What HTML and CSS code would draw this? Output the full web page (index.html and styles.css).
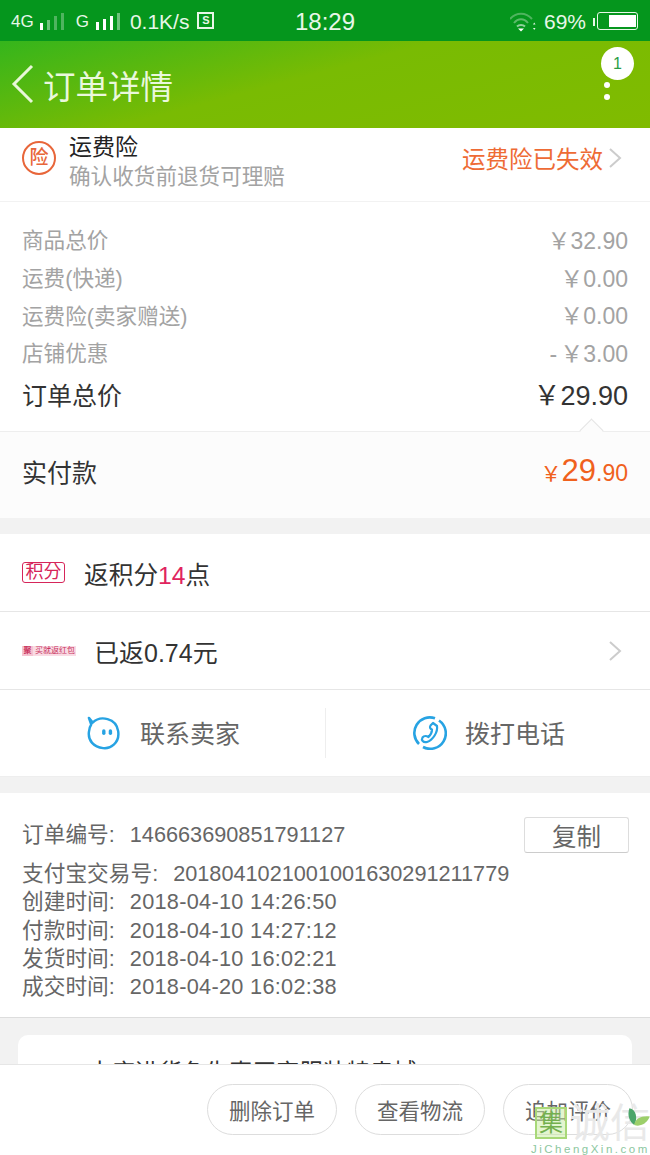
FILE: index.html
```html
<!DOCTYPE html>
<html lang="zh-CN">
<head>
    <meta charset="UTF-8">
    <meta name="viewport" content="width=device-width, initial-scale=1.0">
    <title>订单详情</title>
    <link rel="stylesheet" href="styles.css">
</head>
<body>
    <div class="page">
        <div class="status-bar">
            <div class="status-left">
                <span class="net-4g">4G</span>
                <svg class="signal" width="30" height="22" viewBox="0 0 30 22">
                    <rect x="0" y="12" width="3" height="7" fill="#fff"/>
                    <rect x="7" y="9" width="3" height="10" fill="#6fc27c"/>
                    <rect x="14" y="5" width="3" height="14" fill="#4fb45f"/>
                    <rect x="21" y="2" width="3" height="17" fill="#4fb45f"/>
                </svg>
                <span class="net-g">G</span>
                <svg class="signal" width="26" height="22" viewBox="0 0 26 22">
                    <rect x="0" y="11" width="3" height="8" fill="#fff"/>
                    <rect x="7" y="8" width="3" height="11" fill="#fff"/>
                    <rect x="14" y="5" width="3" height="14" fill="#fff"/>
                    <rect x="21" y="2" width="3" height="17" fill="#6fc27c"/>
                </svg>
                <span class="speed">0.1K/s</span>
                <span class="s-icon">S</span>
            </div>
            <div class="clock">18:29</div>
            <div class="status-right">
                <svg width="26" height="22" viewBox="0 0 26 22" fill="none">
                    <path d="M0 8 C6 1 16 1 22 8" stroke="#4fb45f" stroke-width="2"/>
                    <path d="M4 12 C8 7 14 7 18 12" stroke="#5cba6a" stroke-width="2"/>
                    <path d="M7 15.500 C9 13.500 13 13.500 15 15.500" stroke="#8fd09a" stroke-width="2"/>
                    <path d="M8 17.500 L14 17.500 L11 20.500 Z" fill="#fff"/>
                    <path d="M23 13.500 L25.500 13.500 L24.250 11.500 Z M23 17 L25.500 17 L24.250 19 Z" fill="#e8f7e8"/>
                </svg>
                <span class="percent">69%</span>
                <div class="battery-nub"></div>
                <div class="battery"><div class="battery-fill"></div></div>
            </div>
        </div>

        <header class="topbar">
            <svg class="back" width="24" height="40" viewBox="0 0 24 40" fill="none">
                <path d="M21 2 L3 20 L21 38" stroke="#e8f7d8" stroke-width="3"/>
            </svg>
            <h1 class="title">订单详情</h1>
            <div class="more">
                <span class="more-badge">1</span>
                <i class="more-dot"></i>
                <i class="more-dot"></i>
            </div>
        </header>

        <main class="content">
            <section class="insurance">
                <div class="insurance-icon">险</div>
                <div class="insurance-text">
                    <div class="insurance-name">运费险</div>
                    <div class="insurance-desc">确认收货前退货可理赔</div>
                </div>
                <div class="insurance-state">运费险已失效</div>
                <svg class="chevron" width="14" height="22" viewBox="0 0 14 22" fill="none">
                    <path d="M2 2 L12 11 L2 20" stroke="#ccc" stroke-width="2"/>
                </svg>
            </section>

            <section class="prices">
                <div class="price-row"><span>商品总价</span><span class="price-value">￥32.90</span></div>
                <div class="price-row"><span>运费(快递)</span><span class="price-value">￥0.00</span></div>
                <div class="price-row"><span>运费险(卖家赠送)</span><span class="price-value">￥0.00</span></div>
                <div class="price-row"><span>店铺优惠</span><span class="price-value"><span class="minus">-</span>￥3.00</span></div>
                <div class="price-total"><span>订单总价</span><span class="total-value">￥29.90</span></div>
                <i class="price-arrow"></i>
            </section>

            <section class="paid">
                <span class="paid-label">实付款</span>
                <span class="paid-amount"><small class="paid-yen">￥</small>29<small class="paid-cents">.90</small></span>
            </section>

            <section class="block perks">
                <div class="perk-row">
                    <span class="points-tag">积分</span>
                    <span class="perk-text">返积分<em>14</em>点</span>
                </div>
                <div class="perk-row">
                    <span class="packet-tag"><b>聚</b>买就返红包</span>
                    <span class="perk-text perk-text-wide">已返0.74元</span>
                    <svg class="chevron chevron-end" width="14" height="22" viewBox="0 0 14 22" fill="none">
                        <path d="M2 2 L12 11 L2 20" stroke="#ccc" stroke-width="2"/>
                    </svg>
                </div>
                <div class="contact-row">
                    <div class="contact">
                        <svg width="34" height="34" viewBox="0 0 36 36" fill="none">
                            <path d="M6 7 C14 -1 31 2 33 16 C35 29 24 35 17 34 C7 33 1 26 2 17 C2.300 14 3 11 4.500 9 L2 2 Z" stroke="#27a3e3" stroke-width="2.600" stroke-linejoin="round"/>
                            <rect x="16" y="14" width="3.600" height="6" rx="1.800" fill="#27a3e3"/>
                            <rect x="23" y="14" width="3.600" height="6" rx="1.800" fill="#27a3e3"/>
                        </svg>
                        <span>联系卖家</span>
                    </div>
                    <div class="contact contact-phone">
                        <svg width="34" height="34" viewBox="0 0 34 34" fill="none">
                            <path d="M6 28 A15.500 15.500 0 0 1 22 2.300" stroke="#27a3e3" stroke-width="2.600"/>
                            <path d="M26 4.500 A15.500 15.500 0 0 1 10 31" stroke="#27a3e3" stroke-width="2.600"/>
                            <path d="M20 7 L24 10 C25 16 20 24 14 26 C10 27 8 24 9.500 21.500 C11 19.500 14 20 15.500 21 C17.500 19 19 16.500 19 13.500 C17 13 16.500 11 17.500 9.500 Z" stroke="#27a3e3" stroke-width="2.200" stroke-linejoin="round"/>
                        </svg>
                        <span>拨打电话</span>
                    </div>
                </div>
            </section>

            <section class="block order-info">
                <div class="info-first">
                    <div class="info-main">
                        <span class="info-key">订单编号:</span>
                        <span class="info-value">146663690851791127</span>
                    </div>
                    <button class="copy-btn">复制</button>
                </div>
                <div class="info-row"><span class="info-key">支付宝交易号:</span><span class="info-value">2018041021001001630291211779</span></div>
                <div class="info-row"><span class="info-key">创建时间:</span><span class="info-value info-date">2018-04-10 14:26:50</span></div>
                <div class="info-row"><span class="info-key">付款时间:</span><span class="info-value info-date">2018-04-10 14:27:12</span></div>
                <div class="info-row"><span class="info-key">发货时间:</span><span class="info-value info-date">2018-04-10 16:02:21</span></div>
                <div class="info-row"><span class="info-key">成交时间:</span><span class="info-value info-date">2018-04-20 16:02:38</span></div>
            </section>

            <section class="tip-card">本店进货色失真买家服装特卖城</section>
        </main>

        <footer class="actions">
            <button class="pill">删除订单</button>
            <button class="pill">查看物流</button>
            <button class="pill">追加评价</button>
        </footer>

        <div class="watermark">
            <div class="mark-row">
                <span class="mark-box">集</span>
                <span class="mark-name">诚信</span>
                <svg class="mark-leaf" width="24" height="24" viewBox="0 0 20 20">
                    <path d="M2 1 C8 2 9 10 6 15 C2 12 0 7 2 1 Z" fill="#4ca56a"/>
                    <path d="M6 15 C7 9 13 7 19 8 C17 13 12 17 6 15 Z" fill="#9ccf6a"/>
                </svg>
            </div>
            <div class="mark-url">JiChengXin.com</div>
        </div>
    </div>
</body>
</html>
```

FILE: styles.css
```css
* {
    box-sizing: border-box;
}
body {
    margin: 0;
    font-family: "Liberation Sans", "Noto Sans CJK SC", sans-serif;
    background-color: #f2f2f2;
}
.page {
    position: relative;
    width: 650px;
    height: 1155px;
    display: flex;
    flex-direction: column;
    overflow: hidden;
}

/* status bar */
.status-bar {
    height: 41px;
    flex: none;
    display: flex;
    align-items: center;
    padding: 2px 12px 0 11px;
    background-color: #05961d;
    color: #e8f7e8;
}
.status-left {
    width: 284px;
    flex: none;
    display: flex;
    align-items: center;
}
.net-4g {
    font-size: 17px;
    margin-right: 6px;
}
.net-g {
    font-size: 17px;
    margin: 0 7px 0 6px;
}
.signal {
    flex: none;
}
.speed {
    font-size: 21px;
    margin: 0 8px 0 8px;
}
.s-icon {
    width: 17px;
    height: 17px;
    margin-top: -3px;
    border: 2px solid #e8f7e8;
    font-size: 11px;
    font-weight: bold;
    line-height: 13px;
    text-align: center;
}
.clock {
    flex: 1;
    font-size: 24px;
}
.status-right {
    display: flex;
    align-items: center;
    gap: 8px;
}
.percent {
    font-size: 21px;
    margin-right: -1px;
}
.battery-nub {
    width: 2px;
    height: 8px;
    margin-right: -6px;
    background-color: #e8f7e8;
}
.battery {
    width: 41px;
    height: 18px;
    margin-top: -2px;
    border: 1px solid #e8f7e8;
    border-radius: 3px;
    padding: 2px 1px;
    display: flex;
    justify-content: flex-end;
}
.battery-fill {
    width: 27px;
    background-color: #fff;
}

/* title bar */
.topbar {
    height: 87px;
    flex: none;
    display: flex;
    align-items: center;
    padding: 0 16px 0 11px;
    background: linear-gradient(165deg, #35b51c 0%, #79bb03 45%, #80bb00 100%);
}
.back {
    margin: -1px 8px 0 0;
}
.title {
    flex: 1;
    margin: 0;
    font-size: 32.500px;
    font-weight: normal;
    color: #eaf8dc;
}
.more {
    width: 33px;
    display: flex;
    flex-direction: column;
    align-items: center;
    gap: 6px;
    margin-bottom: 22px;
}
.more-badge {
    width: 33px;
    height: 33px;
    margin-bottom: -4px;
    border-radius: 50%;
    background-color: #fff;
    color: #2a9d46;
    font-size: 16px;
    line-height: 33px;
    text-align: center;
}
.more-dot {
    width: 6px;
    height: 6px;
    border-radius: 50%;
    background-color: #fff;
    margin-right: 21px;
}

/* main */
.content {
    flex: 1;
    overflow: hidden;
}
.insurance {
    height: 74px;
    display: flex;
    align-items: center;
    padding: 0 28px 14px 22px;
    background-color: #fff;
    border-bottom: 1px solid #f2f2f2;
}
.insurance-icon {
    width: 34px;
    height: 34px;
    border: 2px solid #e8663a;
    border-radius: 50%;
    color: #e8663a;
    font-size: 19px;
    font-weight: 500;
    line-height: 29px;
    text-align: center;
    margin-right: 13px;
}
.insurance-text {
    flex: 1;
}
.insurance-name {
    font-size: 23px;
    line-height: 30px;
    color: #222;
    margin-top: 8px;
}
.insurance-desc {
    font-size: 21.600px;
    line-height: 30px;
    color: #a3a3a3;
}
.insurance-state {
    font-size: 23.500px;
    color: #ee6b35;
    margin-right: 5px;
}
.chevron {
    flex: none;
}
.prices {
    position: relative;
    height: 230px;
    padding: 18px 22px 0;
    background-color: #fff;
    border-bottom: 1px solid #eee;
}
.price-row,
.price-total {
    display: flex;
    justify-content: space-between;
    align-items: center;
}
.price-row {
    height: 37.700px;
    font-size: 21.600px;
    color: #a3a3a3;
}
.price-value {
    font-size: 23px;
}
.minus {
    margin-right: 3px;
}
.price-total {
    height: 44px;
    margin-top: 1px;
    font-size: 25px;
    color: #333;
}
.total-value {
    font-size: 27px;
}
.price-arrow {
    position: absolute;
    right: 50px;
    bottom: -8px;
    width: 17px;
    height: 17px;
    background-color: #fcfcfc;
    border-left: 1px solid #e4e4e4;
    border-top: 1px solid #e4e4e4;
    transform: rotate(45deg);
}
.paid {
    height: 86px;
    display: flex;
    justify-content: space-between;
    align-items: center;
    padding: 0 22px 8px;
    background-color: #fcfcfc;
}
.paid-label {
    font-size: 25px;
    color: #333;
}
.paid-amount {
    font-size: 31px;
    color: #f0611d;
}
.paid-yen {
    font-size: 21px;
}
.paid-cents {
    font-size: 23px;
}
.block {
    margin-top: 16px;
    background-color: #fff;
}
.perk-row {
    height: 78px;
    display: flex;
    align-items: center;
    padding: 0 28px 0 22px;
    border-bottom: 1px solid #e6e6e6;
}
.points-tag {
    width: 43px;
    height: 21px;
    border: 1px solid #d6255a;
    border-radius: 3px;
    color: #d6255a;
    font-size: 18px;
    line-height: 18px;
    text-align: center;
    margin: -1px 19px 0 0;
}
.perk-text {
    font-size: 24.700px;
    color: #333;
}
.perk-text em {
    font-style: normal;
    color: #e0245e;
}
.perk-text-wide {
    flex: 1;
    font-size: 25px;
    margin-left: -1px;
}
.packet-tag {
    width: 54px;
    height: 10px;
    margin-right: 19px;
    background-color: #f9dbe4;
    color: #c9345f;
    font-size: 8px;
    line-height: 10px;
    white-space: nowrap;
    overflow: hidden;
}
.packet-tag b {
    display: inline-block;
    width: 11px;
    text-align: center;
    margin-right: 2px;
    background-color: #f5c4d2;
}
.contact-row {
    height: 87px;
    display: flex;
    align-items: center;
    border-bottom: 1px solid #eee;
}
.contact {
    flex: 0 0 50%;
    height: 50px;
    display: flex;
    align-items: center;
    justify-content: center;
    gap: 19px;
    padding-left: 2px;
    font-size: 25px;
    color: #666;
}
.contact span {
    margin-top: -2px;
}
.contact-phone {
    gap: 18px;
    border-left: 1px solid #eee;
}
.order-info {
    height: 225px;
    padding: 24px 22px 0;
    border-bottom: 1px solid #ddd;
    font-size: 21.700px;
    color: #666;
}
.info-first {
    display: flex;
    align-items: center;
    height: 36px;
    margin-bottom: 3px;
}
.info-main {
    flex: 1;
    display: flex;
    align-items: baseline;
    margin-bottom: 5px;
}
.info-row {
    display: flex;
    height: 28.250px;
    align-items: baseline;
}
.info-key {
    margin-right: 15px;
}
.info-date {
    letter-spacing: 0.300px;
}
.copy-btn {
    width: 105px;
    height: 36px;
    margin-right: -1px;
    padding: 0;
    border: 1px solid #ddd;
    border-bottom-color: #ccc;
    border-radius: 3px;
    background-color: #fff;
    font-family: inherit;
    font-size: 24.500px;
    color: #666;
}
.tip-card {
    height: 120px;
    margin: 17px 18px 0;
    padding: 19px 0 0 70px;
    background-color: #fff;
    border-radius: 10px;
    font-size: 23.500px;
    color: #333;
    white-space: nowrap;
}

/* bottom bar */
.actions {
    height: 91px;
    flex: none;
    display: flex;
    justify-content: flex-end;
    align-items: flex-start;
    gap: 18px;
    padding: 19px 17px 0 0;
    background-color: #fff;
    border-top: 1px solid #e6e6e6;
}
.pill {
    width: 130px;
    height: 51px;
    padding: 0;
    border: 1px solid #ddd;
    border-radius: 26px;
    background-color: #fff;
    font-family: inherit;
    font-size: 21.500px;
    color: #666;
}

/* watermark sits over the bottom bar */
.watermark {
    position: absolute;
    left: 535px;
    top: 1106px;
    width: 115px;
}
.mark-row {
    display: flex;
    align-items: center;
    height: 34px;
}
.mark-box {
    flex: none;
    width: 32px;
    height: 32px;
    border: 2px solid #a8d878;
    background-color: rgba(200, 235, 160, 0.5);
    color: #74b04e;
    font-size: 24px;
    line-height: 27px;
    text-align: center;
}
.mark-name {
    font-size: 40px;
    color: #e9e9e9;
    margin-left: 3px;
    line-height: 34px;
    white-space: nowrap;
}
.mark-leaf {
    position: absolute;
    left: 92px;
    top: 1px;
}
.mark-url {
    font-size: 11.500px;
    letter-spacing: 2.500px;
    color: #8cc7a0;
    margin: 3px 0 0 -4px;
    white-space: nowrap;
}
```
